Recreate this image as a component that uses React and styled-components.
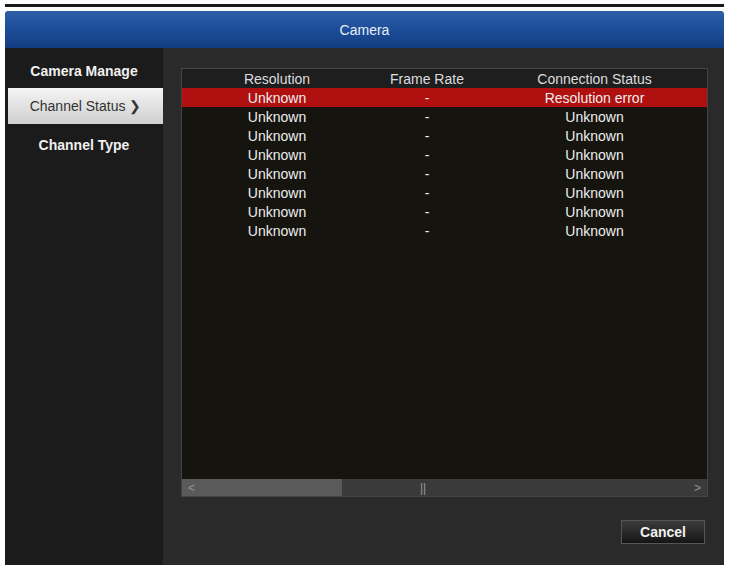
import React from 'react';
import styled, { createGlobalStyle } from 'styled-components';

const Global = createGlobalStyle`
  html, body { margin: 0; background: #fff; font-family: "Liberation Sans", Arial, sans-serif; }
`;

const Page = styled.div`
  width: 729px;
  height: 565px;
  padding: 4px 5px 0 5px;
  box-sizing: border-box;
  display: flex;
  flex-direction: column;
`;

const TopLine = styled.div`
  height: 3px;
  background: #1a1a1a;
  margin-bottom: 4px;
`;

const Dialog = styled.div`
  flex: 1;
  display: flex;
  flex-direction: column;
  background: #2a2a2a;
  border-radius: 4px 4px 0 0;
  overflow: hidden;
`;

const TitleBar = styled.div`
  height: 37px;
  background: linear-gradient(#2d5ea8, #1a4a94 60%, #153d80);
  color: #e8eef8;
  font-size: 14px;
  display: flex;
  align-items: center;
  justify-content: center;
`;

const Body = styled.div`
  flex: 1;
  display: flex;
`;

const Sidebar = styled.div`
  width: 158px;
  background: #1b1b1b;
  padding-top: 8px;
  display: flex;
  flex-direction: column;
  gap: 2px;
`;

const NavItem = styled.div`
  height: ${p => (p.$active ? '36px' : '30px')};
  margin: ${p => (p.$active ? '0 0 4px 3px' : '0')};
  display: flex;
  align-items: center;
  justify-content: center;
  font-size: 14px;
  font-weight: ${p => (p.$active ? 'normal' : 'bold')};
  color: ${p => (p.$active ? '#333' : '#f0f0f0')};
  background: ${p => (p.$active ? 'linear-gradient(#f4f4f4, #cfcfcf)' : 'transparent')};
`;

const Main = styled.div`
  flex: 1;
  padding: 20px 16px 0 18px;
  display: flex;
  flex-direction: column;
`;

const Table = styled.div`
  height: 427px;
  background: #15140f;
  border: 1px solid #444;
  display: flex;
  flex-direction: column;
`;

const Row = styled.div`
  display: grid;
  grid-template-columns: 190px 110px 1fr;
  height: 19px;
  align-items: center;
  font-size: 14px;
  color: #eee;
  background: ${p => (p.$error ? '#b01010' : 'transparent')};
  text-align: center;
`;

const Header = styled(Row)`
  color: #ddd;
  background: #1e1e1e;
`;

const Cell = styled.span``;

const Spacer = styled.div`
  flex: 1;
`;

const Scroll = styled.div`
  height: 17px;
  background: #3a3a3a;
  display: flex;
  align-items: center;
  color: #999;
  font-size: 12px;
`;

const Thumb = styled.div`
  width: 160px;
  height: 100%;
  background: #5a5a5a;
  display: flex;
  align-items: center;
  padding-left: 6px;
  box-sizing: border-box;
`;

const Grip = styled.span`
  flex: 1;
  text-align: center;
  padding-right: 190px;
`;

const Arrow = styled.span`
  padding-right: 6px;
`;

const Footer = styled.div`
  flex: 1;
  display: flex;
  justify-content: flex-end;
  align-items: center;
  padding-right: 3px;
`;

const Button = styled.button`
  width: 84px;
  height: 24px;
  background: linear-gradient(#3c3c3c, #151515);
  border: 1px solid #555;
  color: #f2f2f2;
  font-family: inherit;
  font-size: 14px;
  font-weight: bold;
  margin-top: 2px;
`;

const rows = Array.from({ length: 8 }, (_, i) => i);

export default function App() {
  return (
    <Page>
      <Global />
      <TopLine />
      <Dialog>
        <TitleBar>Camera</TitleBar>
        <Body>
          <Sidebar>
            <NavItem>Camera Manage</NavItem>
            <NavItem $active>Channel Status ❯</NavItem>
            <NavItem>Channel Type</NavItem>
          </Sidebar>
          <Main>
            <Table>
              <Header>
                <Cell>Resolution</Cell>
                <Cell>Frame Rate</Cell>
                <Cell>Connection Status</Cell>
              </Header>
              {rows.map(i => (
                <Row key={i} $error={i === 0}>
                  <Cell>Unknown</Cell>
                  <Cell>-</Cell>
                  <Cell>{i === 0 ? 'Resolution error' : 'Unknown'}</Cell>
                </Row>
              ))}
              <Spacer />
              <Scroll>
                <Thumb>&lt;</Thumb>
                <Grip>||</Grip>
                <Arrow>&gt;</Arrow>
              </Scroll>
            </Table>
            <Footer>
              <Button>Cancel</Button>
            </Footer>
          </Main>
        </Body>
      </Dialog>
    </Page>
  );
}
